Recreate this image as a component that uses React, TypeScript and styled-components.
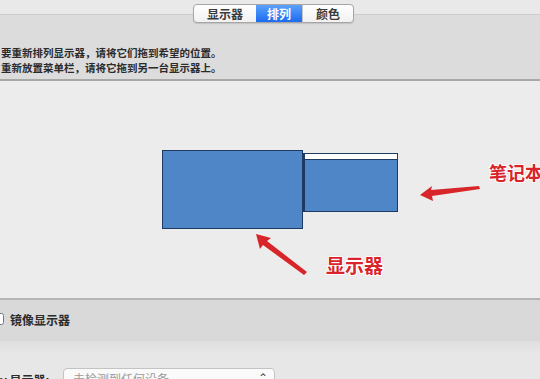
import React, {useState} from "react";
import styled, {createGlobalStyle} from "styled-components";

const GlobalStyle = createGlobalStyle`
  html, body {
    margin: 0;
    padding: 0;
    background: #e6e6e6;
  }
  body {
    font-family: "Noto Sans CJK SC", "Noto Sans", sans-serif;
  }
`

const tabs = ['显示器', '排列', '颜色']

const Segment = ({label, active, onClick}: {label: string, active: boolean, onClick: () => void}) => (
    <SegmentButton $active={active} onClick={onClick}>{label}</SegmentButton>
)

const Arrows = () => (
    <ArrowLayer width="540" height="217" viewBox="0 81 540 217">
        <polygon points="420,195 432,186 431,190 479,186 480,189 432,196 433,201" fill="#d8252a"/>
        <polygon points="256,234 271,238 267,241 307,272 304,275 263,245 260,249" fill="#d8252a"/>
    </ArrowLayer>
)

export default function App() {
    const [tab, setTab] = useState<number>(1)
    const [mirror, setMirror] = useState<boolean>(false)

    return (
        <Window>
            <GlobalStyle/>
            <TopBar>
                <SegmentedControl>
                    {tabs.map((t, i) => (
                        <Segment key={t} label={t} active={tab === i} onClick={() => setTab(i)}/>
                    ))}
                </SegmentedControl>
            </TopBar>
            <InfoBand>
                <InfoLine>要重新排列显示器，请将它们拖到希望的位置。</InfoLine>
                <InfoLine>重新放置菜单栏，请将它拖到另一台显示器上。</InfoLine>
            </InfoBand>
            <Canvas>
                <Monitor/>
                <Laptop>
                    <MenuBar/>
                </Laptop>
                <Arrows/>
                <Callout $x={489} $y={78} $size={18}>笔记本</Callout>
                <Callout $x={326} $y={170} $size={19}>显示器</Callout>
            </Canvas>
            <MirrorBand>
                <CheckBox type="checkbox" checked={mirror} onChange={() => setMirror(!mirror)}/>
                <MirrorLabel>镜像显示器</MirrorLabel>
            </MirrorBand>
            <BottomArea>
                <AirplayRow>
                    <RowLabel>y 显示器:</RowLabel>
                    <Select>
                        <SelectText>未检测到任何设备</SelectText>
                        <Chevron>⌃</Chevron>
                    </Select>
                </AirplayRow>
            </BottomArea>
        </Window>
    )
}

const Window = styled.div`
  width: 540px;
  height: 379px;
  overflow: hidden;
  display: flex;
  flex-direction: column;
  background: #e6e6e6;
`

const TopBar = styled.div`
  height: 15px;
  box-sizing: border-box;
  flex: none;
  background: #e9e9e9;
  border-bottom: 1px solid #cdcdcd;
  display: flex;
  align-items: flex-start;
  padding: 4px 0 0 193px;
  position: relative;
  z-index: 2;
`

const SegmentedControl = styled.div`
  display: flex;
  height: 17px;
  border: 1px solid #a6a6a6;
  border-radius: 4px;
  background: linear-gradient(#ffffff, #f1f1f1);
  box-shadow: 0 1px 1px rgba(0, 0, 0, 0.12);
  overflow: hidden;
`

const SegmentButton = styled.div<{ $active: boolean }>`
  display: flex;
  align-items: center;
  justify-content: center;
  padding: 0 ${p => p.$active ? 11 : 13}px;
  font-size: 12px;
  font-weight: 700;
  line-height: 17px;
  color: ${p => p.$active ? '#ffffff' : '#3a3a3a'};
  background: ${p => p.$active ? 'linear-gradient(#5aa2fb, #1c6bf0)' : 'transparent'};
  border-left: ${p => p.$active ? 'none' : '1px solid #c4c4c4'};
  cursor: pointer;
  &:first-child {
    border-left: none;
  }
`

const InfoBand = styled.div`
  flex: none;
  height: 66px;
  box-sizing: border-box;
  background: #dcdcdc;
  border-bottom: 2px solid #a8a8a8;
  padding: 30px 0 0 1px;
  display: flex;
  flex-direction: column;
`

const InfoLine = styled.div`
  font-size: 10.5px;
  font-weight: 700;
  line-height: 15px;
  color: #2b2b2b;
  white-space: nowrap;
`

const Canvas = styled.div`
  flex: none;
  height: 219px;
  box-sizing: border-box;
  background: #ececec;
  border-bottom: 2px solid #b4b4b4;
  position: relative;
`

const Monitor = styled.div`
  position: absolute;
  left: 162px;
  top: 69px;
  width: 141px;
  height: 79px;
  box-sizing: border-box;
  background: #4e86c8;
  border: 1px solid #1d3a63;
`

const Laptop = styled.div`
  position: absolute;
  left: 303px;
  top: 72px;
  width: 95px;
  height: 59px;
  box-sizing: border-box;
  background: #4e86c8;
  border: 1px solid #1d3a63;
  border-left-width: 2px;
`

const MenuBar = styled.div`
  height: 5px;
  background: #ffffff;
  border-bottom: 1px solid #1d3a63;
`

const ArrowLayer = styled.svg`
  position: absolute;
  left: 0;
  top: 0;
  pointer-events: none;
`

const Callout = styled.div<{ $x: number, $y: number, $size: number }>`
  position: absolute;
  left: ${p => p.$x}px;
  top: ${p => p.$y}px;
  font-size: ${p => p.$size}px;
  font-weight: 700;
  color: #d8242a;
  white-space: nowrap;
  text-shadow: 1px 1px 0 #fff, -1px -1px 0 #fff, 1px -1px 0 #fff, -1px 1px 0 #fff,
  0 0 3px #f3c9c9;
`

const MirrorBand = styled.div`
  flex: none;
  height: 41px;
  background: #d9d9d9;
  display: flex;
  align-items: center;
  gap: 6px;
  padding-bottom: 3px;
  box-sizing: border-box;
`

const CheckBox = styled.input`
  width: 12px;
  height: 12px;
  margin: 0 0 0 -8px;
  accent-color: #2d6ef2;
`

const MirrorLabel = styled.span`
  font-size: 12px;
  font-weight: 700;
  color: #2b2b2b;
`

const BottomArea = styled.div`
  flex: 1;
  background: linear-gradient(#dedede, #e7e7e7 12px);
  padding-top: 27px;
`

const AirplayRow = styled.div`
  display: flex;
  align-items: flex-start;
  gap: 8px;
`

const RowLabel = styled.span`
  font-size: 12px;
  font-weight: 700;
  color: #2b2b2b;
  padding-top: 3px;
  width: 55px;
  white-space: nowrap;
`

const Select = styled.div`
  width: 212px;
  height: 18px;
  box-sizing: border-box;
  border: 1px solid #c3c3c3;
  border-radius: 4px;
  background: #fafafa;
  display: flex;
  justify-content: space-between;
  padding: 0 6px 0 9px;
  margin-left: 0;
`

const SelectText = styled.span`
  font-size: 12px;
  color: #9a9a9a;
  line-height: 20px;
`

const Chevron = styled.span`
  font-size: 12px;
  color: #555;
  line-height: 16px;
`
